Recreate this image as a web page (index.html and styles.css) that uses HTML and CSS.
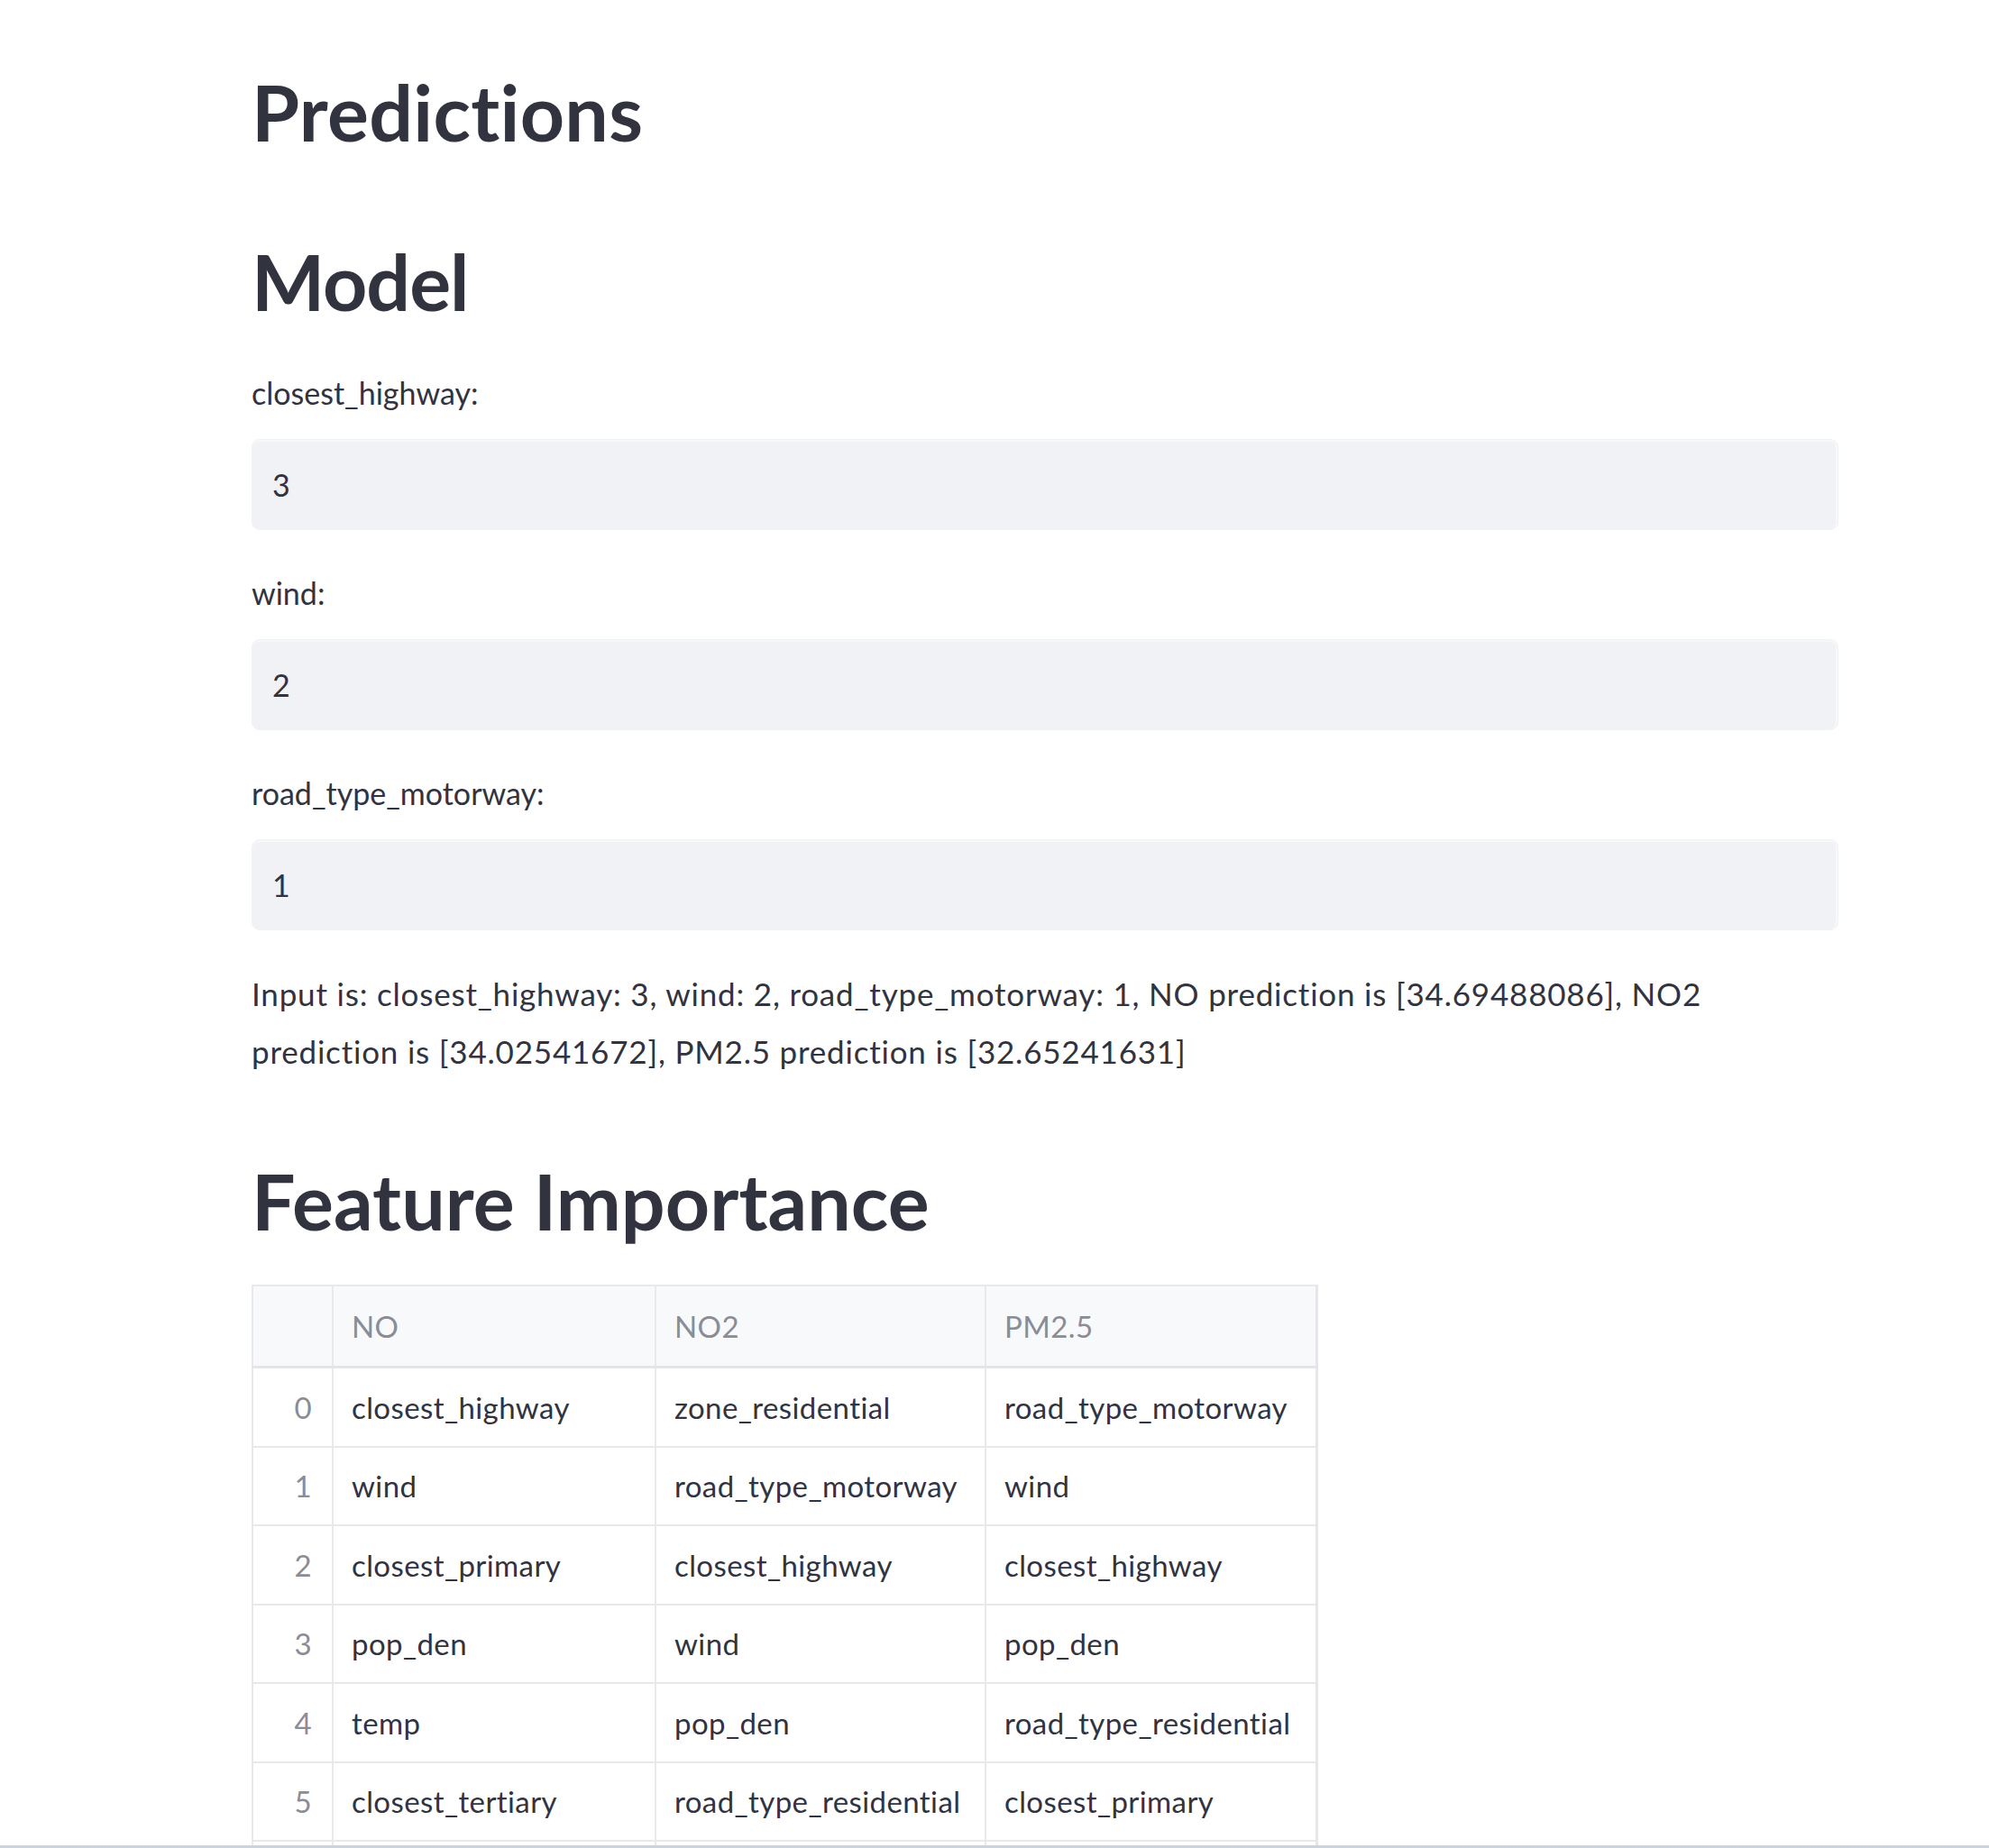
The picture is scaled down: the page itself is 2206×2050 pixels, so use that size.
FILE: index.html
```html
<!DOCTYPE html>
<html lang="en">
<head>
<meta charset="utf-8">
<title>Predictions</title>
<link rel="stylesheet" href="styles.css">
</head>
<body>
<main class="main">
  <h2 class="heading heading-first">Predictions</h2>
  <h2 class="heading heading-model">Model</h2>

  <div class="fields">
    <div class="field">
      <label class="field-label">closest_highway:</label>
      <div class="field-input"><span class="field-value">3</span></div>
    </div>
    <div class="field">
      <label class="field-label">wind:</label>
      <div class="field-input"><span class="field-value">2</span></div>
    </div>
    <div class="field">
      <label class="field-label">road_type_motorway:</label>
      <div class="field-input"><span class="field-value">1</span></div>
    </div>
  </div>

  <p class="result">Input is: closest_highway: 3, wind: 2, road_type_motorway: 1, NO prediction is [34.69488086], NO2 prediction is [34.02541672], PM2.5 prediction is [32.65241631]</p>

  <h2 class="heading heading-feature">Feature Importance</h2>

  <div class="table-wrap">
    <table class="grid">
      <colgroup>
        <col class="c-idx"><col class="c-no"><col class="c-no2"><col class="c-pm">
      </colgroup>
      <thead>
        <tr><th class="idx"></th><th>NO</th><th>NO2</th><th>PM2.5</th></tr>
      </thead>
      <tbody>
        <tr><td class="idx">0</td><td>closest_highway</td><td>zone_residential</td><td>road_type_motorway</td></tr>
        <tr><td class="idx">1</td><td>wind</td><td>road_type_motorway</td><td>wind</td></tr>
        <tr><td class="idx">2</td><td>closest_primary</td><td>closest_highway</td><td>closest_highway</td></tr>
        <tr><td class="idx">3</td><td>pop_den</td><td>wind</td><td>pop_den</td></tr>
        <tr><td class="idx">4</td><td>temp</td><td>pop_den</td><td>road_type_residential</td></tr>
        <tr><td class="idx">5</td><td>closest_tertiary</td><td>road_type_residential</td><td>closest_primary</td></tr>
        <tr><td class="idx"></td><td></td><td></td><td></td></tr>
      </tbody>
    </table>
  </div>
</main>
<div class="scroll-edge"></div>
</body>
</html>
```

FILE: styles.css
```css
html, body {
  margin: 0;
  padding: 0;
  background: #ffffff;
}

body {
  font-family: Lato, "Noto Sans", "Liberation Sans", sans-serif;
  color: #31333f;
  overflow: hidden;
}

.main {
  padding: 70px 167px 0 279px;
  display: flex;
  flex-direction: column;
}

.heading {
  margin: 0;
  font-size: 86px;
  line-height: 108px;
  font-weight: 700;
  color: #31333f;
}

.heading-first {
  letter-spacing: 0.3px;
}

.heading-model {
  margin-top: 80px;
  letter-spacing: -1px;
}

.heading-feature {
  margin-top: 80px;
  letter-spacing: 0.1px;
}

.fields {
  margin-top: 42px;
  display: flex;
  flex-direction: column;
  gap: 42px;
}

.field {
  display: flex;
  flex-direction: column;
  gap: 23px;
}

.field-label {
  font-size: 34px;
  line-height: 56px;
  height: 56px;
  color: #31333f;
}

.field-input {
  box-sizing: border-box;
  height: 101px;
  background: #f0f2f6;
  border-radius: 9px;
  border: 1px solid #f0f2f6;
  box-shadow: inset 0 2px 0 #f7f8fa, inset -2px 0 0 #f7f8fa;
  padding: 2px 22px 0 22px;
  display: flex;
  align-items: center;
}

.field-value {
  font-size: 34px;
  line-height: 1.2;
  color: #31333f;
}

.result {
  margin: 38px 0 0 0;
  font-size: 35px;
  line-height: 64px;
  letter-spacing: 0.8px;
  color: #31333f;
}

.table-wrap {
  margin-top: 39px;
  width: 1180px;
}

.grid {
  border-collapse: collapse;
  table-layout: fixed;
  width: 1180px;
  font-size: 33px;
  letter-spacing: 0.4px;
  border: 2px solid #e6e7eb;
  border-right-width: 3px;
}

.c-idx { width: 89px; }
.c-no { width: 358px; }
.c-no2 { width: 366px; }
.c-pm { width: 367px; }

.grid th,
.grid td {
  border: 2px solid #e8e9ed;
  padding: 0 20px;
  text-align: left;
  white-space: nowrap;
  overflow: hidden;
}

.grid th {
  height: 88px;
  background: #f8f9fb;
  color: #8a8c96;
  font-weight: 400;
  border-bottom-width: 3px;
  border-bottom-color: #e4e5ea;
}

.grid td {
  height: 85.5px;
  color: #31333f;
}

.grid .idx {
  text-align: right;
  color: #8a8c96;
  padding: 0 22px 0 0;
}

.grid th.idx {
  background: #f8f9fb;
}

.scroll-edge {
  position: fixed;
  left: 0;
  right: 0;
  bottom: 0;
  height: 3px;
  background: #cbd3dd;
}
```
